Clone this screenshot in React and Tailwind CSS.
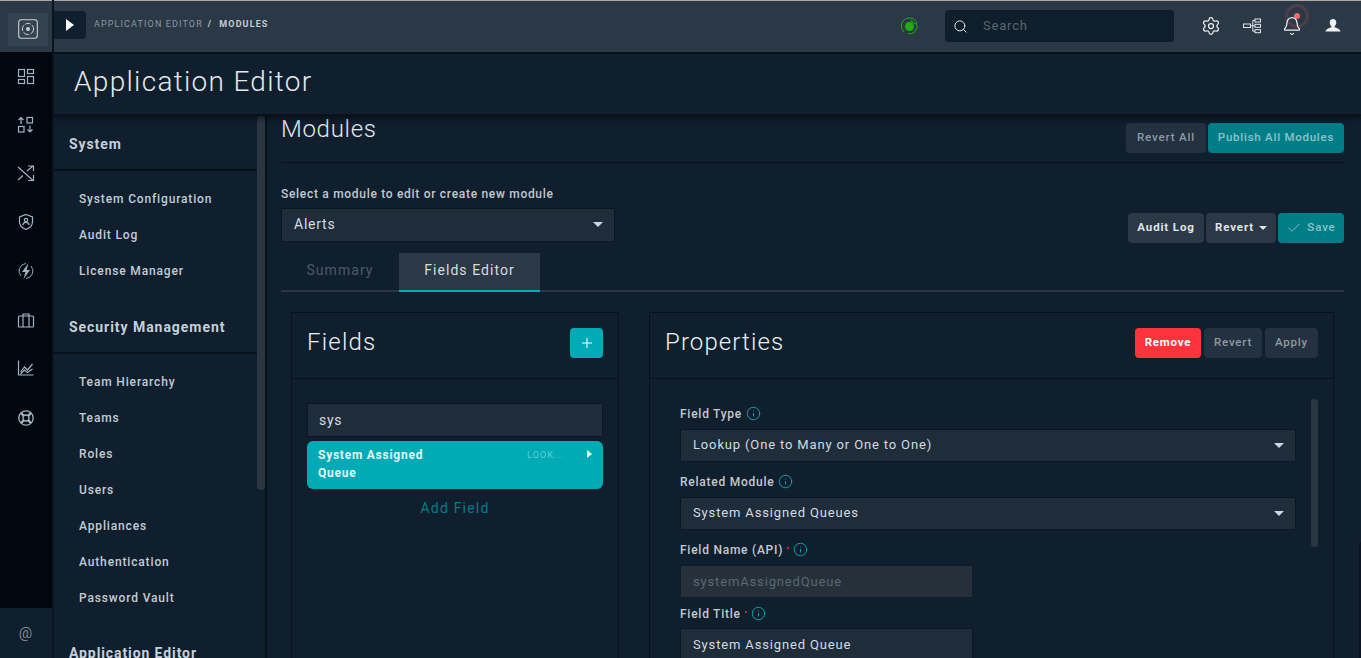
import React from "react";
import { Search, Settings, Bell, Plus, Check, Info } from "lucide-react";

const font = { fontFamily: '"Roboto", "Liberation Sans", sans-serif' };

const SYSTEM_ITEMS = ["System Configuration", "Audit Log", "License Manager"];
const SECURITY_ITEMS = ["Team Hierarchy", "Teams", "Roles", "Users", "Appliances", "Authentication", "Password Vault"];

const Rail = ({ children, top }) => (
  <div className={`flex h-[49px] items-center justify-center pr-[1px] text-[#a3b5c4] ${top}`}>
    <svg width="18" height="18" viewBox="0 0 18 18" fill="none" stroke="currentColor" strokeWidth="1.2">
      {children}
    </svg>
  </div>
);

const Caret = () => (
  <span className="h-0 w-0 border-x-[5px] border-t-[5px] border-x-transparent border-t-[#c5d8e8]" />
);

const Tip = () => <Info size={15} strokeWidth={1.6} className="ml-[4px] text-[#00a5b0]" />;

const Req = () => <span className="ml-[4px] h-[2px] w-[2px] -translate-y-[2px] rounded-full bg-[#f0343c]" />;

const NavItem = ({ label }) => (
  <div className="flex h-9 items-center pl-[25px] text-[12px] font-medium tracking-[0.85px] text-[#c3ccd4]">{label}</div>
);

const SelectBox = ({ value }) => (
  <div className="flex h-[33px] w-[616px] items-center justify-between border border-[#0b1722] bg-[#1f2d3b] pb-[1px] pl-3 pr-[11px] text-[13px] tracking-[0.85px] text-[#d5dbe0]">
    <span>{value}</span>
    <Caret />
  </div>
);

const FieldLabel = ({ children }) => (
  <div className="flex h-[15px] items-center text-[12px] font-medium tracking-[0.75px] text-[#c3c9ce]">{children}</div>
);

export default function App() {
  return (
    <div style={font} className="relative flex h-screen w-full overflow-hidden bg-[#0f1f2e]">
      {/* left rail */}
      <div className="flex w-[54px] shrink-0 flex-col border-r-2 border-[#0a141e] bg-[#01070e]">
        <div className="flex h-[52px] shrink-0 items-center justify-center border-t border-[#a9a9a9] bg-[#2b3846] pl-[3px] pt-[5px]">
          <div className="flex h-[33px] w-[40px] items-center justify-center bg-[#35424f]">
            <svg width="20" height="20" viewBox="0 0 20 20" fill="none" stroke="#c7d0d8">
              <rect x="0.7" y="0.7" width="18.6" height="18.6" rx="2.5" strokeWidth="1.1" />
              <circle cx="10" cy="10" r="5.6" strokeWidth="1" strokeDasharray="6 1.5" />
              <circle cx="10" cy="10" r="2" fill="#c7d0d8" stroke="none" />
            </svg>
          </div>
        </div>
        <Rail top="">
          <rect x="1.5" y="1.5" width="6" height="7" />
          <rect x="10.5" y="1.5" width="6" height="4" />
          <rect x="1.5" y="11.5" width="6" height="4" />
          <rect x="10.5" y="8.5" width="6" height="7" />
        </Rail>
        <Rail top="-mt-[1px]">
          <path d="M4 8V1.5M1.5 4 4 1.5 6.500 4" />
          <rect x="10" y="1.5" width="5.5" height="5.5" />
          <rect x="1.5" y="10.5" width="5.5" height="5.5" />
          <path d="M13 9.500V16M10.500 13.500 13 16l2.500-2.500" />
        </Rail>
        <Rail top="-mt-[1px]">
          <path d="M1 3 15.500 16M1 16l5-4.500M10 7l6-5M11 2h5.500v5M16.500 11v5.500H11" />
        </Rail>
        <Rail top="">
          <path d="M9 1.500 15.500 4v5c0 3.600-2.800 6-6.500 7.500C5.300 15 2.500 12.600 2.500 9V4z" />
          <circle cx="9" cy="7" r="1.700" />
          <path d="M5.800 12c.4-1.800 1.700-2.700 3.200-2.700s2.800.9 3.200 2.700" />
        </Rail>
        <Rail top="">
          <path d="M4 14A7.500 7.500 0 0 1 9 1.500M14 4a7.500 7.500 0 0 1-5 12.500" strokeWidth="0.9" />
          <path d="M11.500 1 5 10h3.500L6.500 17 13 8H9.500z" fill="currentColor" stroke="none" />
        </Rail>
        <Rail top="">
          <rect x="1.500" y="5" width="15" height="11" rx="1" />
          <path d="M6 16V3h6v13" />
        </Rail>
        <Rail top="-mt-[1px]">
          <path d="M1.500 1.500v14.500h15M3.500 13l4-5 3 3 5-6M3.500 15l4-4 3 2.500 5-3.500" />
        </Rail>
        <Rail top="mt-[1px]">
          <circle cx="9" cy="9" r="7.200" strokeWidth="1.300" />
          <circle cx="9" cy="9" r="3" strokeWidth="1.300" />
          <path d="m3.900 3.900 3 3M14.100 3.900l-3 3M3.900 14.100l3-3M14.100 14.100l-3-3" strokeWidth="2.200" />
        </Rail>
        <div className="mt-auto flex h-[50px] items-center justify-center bg-[#0f1f2e] pr-[1px] text-[15px] text-[#7d8790]">@</div>
      </div>

      <div className="flex min-w-0 flex-1 flex-col">
        {/* top bar */}
        <div className="flex h-[54px] shrink-0 items-center border-b-2 border-t border-b-[#08121b] border-t-[#a9a9a9] bg-[#2b3846] pb-[3px]">
          <div className="flex h-[28px] w-[32px] items-center justify-center rounded-r-sm bg-[#0f1f2e]">
            <span className="h-0 w-0 border-y-[6px] border-l-[8px] border-y-transparent border-l-white" />
          </div>
          <div className="ml-2 flex items-center text-[9px] tracking-[1.12px] text-[#8b97a2]">
            APPLICATION EDITOR
            <span className="ml-[5px] font-bold text-[#c5ccd2]">/</span>
            <span className="ml-[7px] font-bold text-[#c5ccd2]">MODULES</span>
          </div>
          <div className="ml-auto flex translate-y-[1px] items-center">
            <svg width="20" height="20" viewBox="0 0 20 20" fill="none" className="mr-[26px]">
              <path d="M5 16A8 8 0 0 1 10 2a8 8 0 0 1 6 13.500 8 8 0 0 1-7 2.400" stroke="#1fae10" strokeWidth="1" />
              <circle cx="10.500" cy="10.500" r="4.500" fill="#1fae10" />
              <path d="m12 4.500 2 2M15 7l1.500 1" stroke="#1fae10" strokeWidth="1.500" />
            </svg>
            <div className="flex h-8 w-[229px] items-center rounded-sm bg-[#0e1e2a] pl-[8px] text-[13px] tracking-[0.8px] text-[#5a6671]">
              <Search size={15} strokeWidth={1.600} className="mr-[15px] text-[#e3e7ea]" />
              Search
            </div>
            <Settings size={20} strokeWidth={1.500} className="ml-[27px] text-[#eef1f3]" />
            <svg width="18" height="16" viewBox="0 0 18 16" fill="none" stroke="#dfe4e8" className="ml-[22px]">
              <rect x="0.500" y="6" width="7" height="3.500" />
              <rect x="12" y="1" width="5.500" height="3" />
              <rect x="12" y="6.300" width="5.500" height="3" />
              <rect x="12" y="11.700" width="5.500" height="3" />
              <path d="M7.500 7.800H12M9.800 2.500v10.700M9.800 2.500H12M9.800 13.200H12" />
            </svg>
            <div className="relative ml-[21px]">
              <span className="absolute -top-[12px] -right-[7px] flex h-[24px] w-[24px] items-center justify-center rounded-full border-[3px] border-[#4d3e4a]">
                <span className="h-[6px] w-[6px] rounded-full bg-[#f9666e]" />
              </span>
              <Bell size={20} strokeWidth={1.500} className="relative text-[#eef1f3]" />
            </div>
            <svg width="16" height="14" viewBox="0 0 16 14" fill="#eef1f3" className="ml-[23px] mr-[20px]">
              <path d="M8 0c2 0 3.300 1.400 3.300 3.400 0 1.700-.8 3-1.700 3.800v1c1.800.7 5.400 1.500 5.900 4.300H.5C1 9.700 4.600 8.900 6.400 8.200v-1C5.500 6.400 4.700 5.100 4.700 3.400 4.700 1.400 6 0 8 0z" />
            </svg>
          </div>
        </div>

        {/* page title */}
        <div className="relative z-10 flex h-[62px] shrink-0 items-center border-b-2 border-[#08121b] pb-[5px] pl-5 text-[28px] font-light tracking-[1.3px] text-[#e4e8eb] shadow-[0_3px_5px_rgba(0,0,0,0.45)]">
          Application Editor
        </div>

        <div className="flex min-h-0 flex-1">
          {/* side nav */}
          <div className="relative w-[213px] shrink-0 overflow-hidden border-r-2 border-[#08121b]">
            <div className="w-[203px]">
              <div className="flex h-[55px] items-center border-b-2 border-[#08121b] pl-[15px] pt-[4px] text-[14px] font-bold tracking-[0.9px] text-[#c5d0da]">System</div>
              <div className="pt-[10px]">
                {SYSTEM_ITEMS.map((item) => <NavItem key={item} label={item} />)}
              </div>
              <div className="mt-[17px] flex h-[48px] items-end border-b-2 border-[#08121b] pb-[18px] pl-[15px] text-[14px] font-bold leading-none tracking-[0.95px] text-[#c5d0da]">Security Management</div>
              <div className="pt-[10px]">
                {SECURITY_ITEMS.map((item) => <NavItem key={item} label={item} />)}
              </div>
              <div className="mt-[27px] pl-[15px] text-[14px] font-bold tracking-[0.9px] text-[#c5d0da]">Application Editor</div>
            </div>
            <div className="absolute right-0 top-0 h-[374px] w-[8px] rounded-sm bg-[#2a3743]" />
          </div>

          {/* main */}
          <div className="min-w-0 flex-1 pl-[14px] pr-[17px]">
            <div className="flex h-[47px] items-start justify-between border-b border-[#08121b]">
              <div className="-mt-[1px] text-[24px] font-light leading-[28px] tracking-[0.7px] text-[#e4e8eb]">Modules</div>
              <div className="mt-[7px] flex gap-[2px]">
                <div className="flex h-[30px] w-[80px] items-center justify-center rounded-sm bg-[#233140] text-[11.500px] font-medium tracking-[0.85px] text-[#8f9aa3]">Revert All</div>
                <div className="flex h-[30px] w-[136px] items-center justify-center rounded-sm bg-[#007e87] text-[11.500px] font-medium tracking-[0.75px] text-[#8fc2c7]">Publish All Modules</div>
              </div>
            </div>

            <div className="flex items-end justify-between">
              <div>
                <div className="mt-[23px] text-[12px] font-medium leading-[16px] tracking-[0.7px] text-[#c3c9ce]">Select a module to edit or create new module</div>
                <div className="mt-[6px] flex h-[34px] w-[334px] items-center justify-between border border-[#0b1722] bg-[#1f2d3b] pb-[2px] pl-3 pr-[11px] text-[14px] tracking-[0.75px] text-[#d5dbe0]">
                  <span>Alerts</span>
                  <Caret />
                </div>
              </div>
              <div className="mb-[-1px] flex gap-[2px]">
                <div className="flex h-[30px] w-[76px] items-center justify-center rounded-sm bg-[#2b3846] text-[11.500px] font-bold tracking-[0.85px] text-[#e0e4e8]">Audit Log</div>
                <div className="flex h-[30px] w-[70px] items-center justify-center gap-[5px] rounded-sm bg-[#2b3846] text-[11.500px] font-bold tracking-[0.85px] text-[#e0e4e8]">
                  Revert
                  <span className="h-0 w-0 border-x-[4px] border-t-[4px] border-x-transparent border-t-[#e0e4e8]" />
                </div>
                <div className="flex h-[30px] w-[66px] items-center justify-center gap-[5px] rounded-sm bg-[#007e87] text-[11.500px] font-medium tracking-[0.85px] text-[#8fc2c7]">
                  <Check size={16} strokeWidth={1.300} />
                  Save
                </div>
              </div>
            </div>

            {/* tabs */}
            <div className="mt-[11px] flex h-[39px] border-b-2 border-[#2a3743] text-[14px] tracking-[1.05px]">
              <div className="flex w-[118px] items-center justify-center pb-[3px] text-[#4d5a66]">Summary</div>
              <div className="-mb-[2px] flex h-[39px] w-[141px] items-center justify-center border-b-2 border-[#00abb5] bg-[#2b3846] pb-[3px] text-[#d5dbe0]">Fields Editor</div>
            </div>

            {/* panels */}
            <div className="mt-[20px] flex gap-[30px] pl-[10px] pr-[10px]">
              <div className="h-[400px] w-[328px] shrink-0 border border-[#08121b]">
                <div className="flex h-[66px] items-center justify-between border-b border-[#08121b] pb-[6px] pl-[15px] pr-[15px]">
                  <span className="-mt-[1px] text-[24px] font-light tracking-[1.200px] text-[#eef1f3]">Fields</span>
                  <span className="flex h-[30px] w-[33px] items-center justify-center rounded-sm bg-[#00abb5] text-white">
                    <Plus size={16} strokeWidth={1.500} />
                  </span>
                </div>
                <div className="px-[15px] pt-[24px]">
                  <div className="flex h-[34px] items-center border border-[#0b1722] bg-[#1f2d3b] pl-[11px] text-[14px] tracking-[0.75px] text-[#d5dbe0]">sys</div>
                  <div className="mt-[4px] flex h-[48px] rounded-md bg-[#00abb5] pl-[11px] pr-[11px] pt-[5px]">
                    <div className="w-[140px] text-[12px] font-bold leading-[18px] tracking-[0.75px] text-[#e4f6f7]">System Assigned Queue</div>
                    <div className="ml-[69px] mt-[3px] text-[9px] leading-[12px] tracking-[1.100px] text-[#5fd0d6]">LOOK...</div>
                    <span className="ml-auto mt-[4px] h-0 w-0 border-y-[4px] border-l-[5px] border-y-transparent border-l-white" />
                  </div>
                  <div className="mt-[9px] text-center text-[14px] tracking-[1.200px] text-[#007e87]">Add Field</div>
                </div>
              </div>

              <div className="relative h-[400px] min-w-0 flex-1 border border-[#08121b]">
                <div className="flex h-[66px] items-center justify-between border-b border-[#08121b] pb-[6px] pl-[15px] pr-[15px]">
                  <span className="-mt-[1px] text-[24px] font-light tracking-[1.100px] text-[#eef1f3]">Properties</span>
                  <div className="flex gap-[3px]">
                    <div className="flex h-[30px] w-[66px] items-center justify-center rounded-sm bg-[#fe333c] text-[11.500px] font-bold tracking-[0.8px] text-white">Remove</div>
                    <div className="flex h-[30px] w-[58px] items-center justify-center rounded-sm bg-[#233140] text-[11.500px] font-medium tracking-[0.8px] text-[#8f9aa3]">Revert</div>
                    <div className="flex h-[30px] w-[53px] items-center justify-center rounded-sm bg-[#233140] text-[11.500px] font-medium tracking-[0.8px] text-[#8f9aa3]">Apply</div>
                  </div>
                </div>
                <div className="pl-[30px] pt-[27px]">
                  <FieldLabel>Field Type<Tip /></FieldLabel>
                  <div className="mt-[8px]"><SelectBox value="Lookup (One to Many or One to One)" /></div>
                  <div className="mt-[12px]"><FieldLabel>Related Module<Tip /></FieldLabel></div>
                  <div className="mt-[8px]"><SelectBox value="System Assigned Queues" /></div>
                  <div className="mt-[12px]"><FieldLabel>Field Name (API)<Req /><Tip /></FieldLabel></div>
                  <div className="mt-[8px] flex h-[33px] w-[293px] items-center border border-[#101c27] bg-[#25303b] pl-3 text-[13px] tracking-[0.85px] text-[#5c6771]">systemAssignedQueue</div>
                  <div className="mt-[8px]"><FieldLabel>Field Title<Req /><Tip /></FieldLabel></div>
                  <div className="mt-[7px] flex h-[33px] w-[293px] items-center border border-[#0b1722] bg-[#1f2d3b] pl-3 text-[13px] tracking-[0.85px] text-[#d5dbe0]">System Assigned Queue</div>
                </div>
                <div className="absolute left-[661px] top-[86px] h-[148px] w-[7px] rounded-sm bg-[#2a3743]" />
              </div>
            </div>
          </div>
        </div>
      </div>
      <div className="absolute bottom-0 right-0 h-[116px] w-[2px] bg-[#0a141e]" />
    </div>
  );
}
